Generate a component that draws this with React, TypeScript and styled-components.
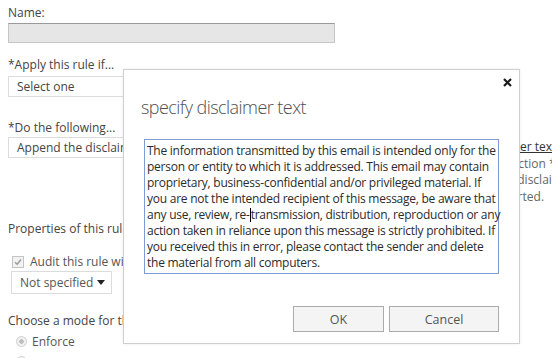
import styled, { createGlobalStyle } from "styled-components";

const GlobalStyle = createGlobalStyle`
  html, body {
    margin: 0;
    padding: 0;
    background: #ffffff;
  }
  body {
    width: 552px;
    height: 358px;
    overflow: hidden;
    font-family: "Open Sans", "Noto Sans", sans-serif;
    font-size: 12px;
    color: #333333;
  }
`;

const Page = styled.div`
  position: relative;
  width: 552px;
  height: 358px;
  padding: 5px 0 0 8px;
  box-sizing: border-box;
`;

const Label = styled.div<{ $top?: number }>`
  line-height: 16px;
  margin-top: ${({ $top }) => $top ?? 0}px;
  color: #444444;
  white-space: nowrap;
`;

const NameInput = styled.div`
  width: 327px;
  height: 20px;
  margin-top: 2px;
  background: #e6e6e6;
  border: 1px solid #c6c6c6;
  border-top-color: #9a9a9a;
  box-sizing: border-box;
`;

const SelectBox = styled.div<{ $top?: number }>`
  flex: none;
  width: 327px;
  height: 21px;
  margin-top: ${({ $top }) => $top ?? 3}px;
  padding-left: 8px;
  border: 1px solid #dcdcdc;
  box-sizing: border-box;
  line-height: 19px;
  color: #444444;
  white-space: nowrap;
  overflow: hidden;
`;

const ActionRow = styled.div`
  display: flex;
  align-items: flex-start;
  gap: 38px;
  margin-top: 1px;
`;

const SideNote = styled.div`
  display: flex;
  flex-direction: column;
  padding-top: 2px;
  line-height: 16.5px;
  color: #666666;
  white-space: nowrap;
`;

const NoteLink = styled.span`
  color: #333333;
  text-decoration: underline;
`;

const CheckRow = styled.div`
  display: flex;
  align-items: center;
  gap: 6px;
  margin-top: 16px;
  padding-left: 4px;
  color: #555555;
`;

const CheckBox = styled.span`
  width: 10px;
  height: 10px;
  border: 1px solid #c4c4c4;
  background: #f2f2f2;
  display: flex;
  align-items: center;
  justify-content: center;
`;

const Dropdown = styled.div`
  display: flex;
  align-items: center;
  justify-content: space-between;
  width: 101px;
  height: 23px;
  margin: 1px 0 0 3px;
  padding: 0 6px 0 8px;
  border: 1px solid #dcdcdc;
  box-sizing: border-box;
  color: #555555;
`;

const RadioRow = styled.div`
  display: flex;
  align-items: center;
  gap: 5px;
  padding-left: 8px;
  height: 16px;
  margin-top: 4px;
  color: #555555;
`;

const Radio = styled.span`
  width: 9px;
  height: 9px;
  border-radius: 50%;
  border: 1px solid #cfcfcf;
  background: radial-gradient(circle, #bdbdbd 0 2px, #f1f1f1 2.5px);
`;

const Dialog = styled.div`
  position: absolute;
  left: 123px;
  top: 69px;
  width: 397px;
  height: 275px;
  box-sizing: border-box;
  background: #ffffff;
  border: 1px solid #cfcfcf;
  box-shadow: 0 0 3px rgba(0, 0, 0, 0.08);
  padding: 23px 21px 0 17px;
  display: flex;
  flex-direction: column;
`;

const CloseButton = styled.span`
  position: absolute;
  right: 7px;
  top: 8px;
  width: 9px;
  height: 9px;
  display: flex;
`;

const Title = styled.div`
  font-size: 18px;
  font-weight: 300;
  line-height: 28px;
  color: #505050;
  letter-spacing: -0.55px;
`;

const TextArea = styled.div`
  margin: 18px 0 0 3px;
  width: 355px;
  height: 135px;
  box-sizing: border-box;
  border: 1px solid #7e9bd3;
  padding: 3px 2px 0 2px;
  line-height: 16px;
  color: #2b2b2b;
  white-space: nowrap;
  letter-spacing: -0.25px;
`;

const Caret = styled.span`
  display: inline-block;
  width: 1px;
  height: 14px;
  background: #000000;
  vertical-align: -3px;
`;

const ButtonRow = styled.div`
  display: flex;
  justify-content: flex-end;
  gap: 5px;
  margin: 32px 0 0 3px;
  width: 355px;
`;

const Button = styled.button<{ $width: number }>`
  width: ${({ $width }) => $width}px;
  height: 26px;
  background: #f4f4f4;
  border: 1px solid #ababab;
  font-family: inherit;
  font-size: 12.5px;
  color: #555555;
  padding: 0;
`;

const lines = [
  "The information transmitted by this email is intended only for the",
  "person or entity to which it is addressed. This email may contain",
  "proprietary, business-confidential and/or privileged material. If",
  "you are not the intended recipient of this message, be aware that",
];

const tail = [
  "action taken in reliance upon this message is strictly prohibited. If",
  "you received this in error, please contact the sender and delete",
  "the material from all computers.",
];

export default function App() {
  return (
    <>
      <GlobalStyle />
      <Page>
        <Label>Name:</Label>
        <NameInput />
        <Label $top={14}>*Apply this rule if...</Label>
        <SelectBox>Select one</SelectBox>
        <Label $top={23}>*Do the following...</Label>
        <ActionRow>
          <SelectBox $top={0}>Append the disclaimer</SelectBox>
          <SideNote>
            <span>
              Append the disclaimer <NoteLink>Enter text</NoteLink>
            </span>
            <span>and then fall back to the action *</span>
            <span>Select one, but only if the disclaimer</span>
            <span>text fails and can't be inserted.</span>
          </SideNote>
        </ActionRow>
        <Label $top={16}>Properties of this rule:</Label>
        <CheckRow>
          <CheckBox>
            <svg width="8" height="8" viewBox="0 0 8 8">
              <path d="M1 4.2 L3.2 6.3 L7 1.5" fill="none" stroke="#9a9a9a" strokeWidth="1.4" />
            </svg>
          </CheckBox>
          <span>Audit this rule with severity level:</span>
        </CheckRow>
        <Dropdown>
          <span>Not specified</span>
          <svg width="8" height="5" viewBox="0 0 8 5">
            <path d="M0 0 H8 L4 5 Z" fill="#222222" />
          </svg>
        </Dropdown>
        <Label $top={19}>Choose a mode for this rule:</Label>
        <RadioRow>
          <Radio />
          <span>Enforce</span>
        </RadioRow>
        <RadioRow>
          <Radio />
        </RadioRow>

        <Dialog>
          <CloseButton>
            <svg width="9" height="9" viewBox="0 0 9 9">
              <path d="M1 1 L8 8 M8 1 L1 8" stroke="#1a1a1a" strokeWidth="2.2" />
            </svg>
          </CloseButton>
          <Title>specify disclaimer text</Title>
          <TextArea>
            {lines.map((line) => (
              <div key={line}>{line}</div>
            ))}
            <div>
              any use, review, re-<Caret />transmission, distribution, reproduction or any
            </div>
            {tail.map((line) => (
              <div key={line}>{line}</div>
            ))}
          </TextArea>
          <ButtonRow>
            <Button $width={91}>OK</Button>
            <Button $width={110}>Cancel</Button>
          </ButtonRow>
        </Dialog>
      </Page>
    </>
  );
}
